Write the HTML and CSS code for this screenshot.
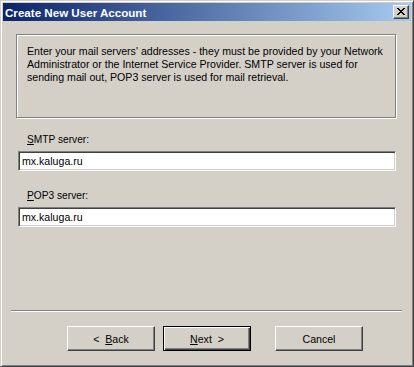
FILE: index.html
```html
<!DOCTYPE html>
<html lang="en">
<head>
    <meta charset="UTF-8">
    <title>Create New User Account</title>
    <link rel="stylesheet" href="styles.css">
</head>
<body>
    <div class="window">
        <div class="titlebar">
            <span class="title">Create New User Account</span>
            <span class="close-btn">
                <svg width="8" height="7" viewBox="0 0 8 7">
                    <path d="M0 0h2v1h-2zM6 0h2v1h-2zM1 1h2v1h-2zM5 1h2v1h-2zM2 2h4v1h-4zM3 3h2v1h-2zM2 4h4v1h-4zM1 5h2v1h-2zM5 5h2v1h-2zM0 6h2v1h-2zM6 6h2v1h-2z" fill="#000"/>
                </svg>
            </span>
        </div>

        <div class="content">
            <div class="info-box">
                Enter your mail servers' addresses - they must be provided by your Network<br>
                Administrator or the Internet Service Provider. SMTP server is used for<br>
                sending mail out, POP3 server is used for mail retrieval.
            </div>

            <div class="field first">
                <label for="smtp"><u>S</u>MTP server:</label>
                <input type="text" id="smtp" value="mx.kaluga.ru">
            </div>

            <div class="field">
                <label for="pop3"><u>P</u>OP3 server:</label>
                <input type="text" id="pop3" value="mx.kaluga.ru">
            </div>

            <div class="separator"></div>

            <div class="buttons">
                <button type="button">&lt;&nbsp; <u>B</u>ack</button>
                <button type="button" class="default"><u>N</u>ext&nbsp; &gt;</button>
                <button type="button" class="cancel">Cancel</button>
            </div>
        </div>
    </div>
</body>
</html>
```

FILE: styles.css
```css
body {
    margin: 0;
    font-family: "Liberation Sans", Arial, sans-serif;
    font-size: 10px;
    color: #000;
}
.window {
    width: 414px;
    height: 367px;
    box-sizing: border-box;
    background-color: #d4d0c8;
    border: 1px solid;
    border-color: #d4d0c8 #404040 #404040 #d4d0c8;
    box-shadow: inset 1px 1px 0 #fff, inset -1px -1px 0 #808080;
    padding: 2px;
    display: flex;
    flex-direction: column;
}
.titlebar {
    height: 18px;
    display: flex;
    align-items: center;
    padding-left: 2px;
    background: linear-gradient(to right, #0a246a, #a6caf0);
}
.title {
    color: #fff;
    font-weight: bold;
    font-size: 11.6px;
    line-height: 13px;
}
.close-btn {
    margin-left: auto;
    margin-right: 2px;
    width: 16px;
    height: 14px;
    box-sizing: border-box;
    background-color: #d4d0c8;
    border: 1px solid;
    border-color: #fff #404040 #404040 #fff;
    box-shadow: inset -1px -1px 0 #808080;
    display: flex;
    align-items: center;
    justify-content: center;
    padding: 0 1px 1px 0;
}
.close-btn svg {
    display: block;
}
.content {
    flex: 1;
    display: flex;
    flex-direction: column;
}
.info-box {
    margin: 13px 0 0 13px;
    width: 380px;
    height: 84px;
    box-sizing: border-box;
    border: 1px solid #808080;
    box-shadow: 1px 1px 0 #fff, inset 1px 1px 0 #fff;
    padding: 10px 8px 0 10px;
    font-size: 10.6px;
    line-height: 13px;
    white-space: nowrap;
}
.field {
    display: flex;
    flex-direction: column;
    margin-left: 15px;
    width: 378px;
}
.field.first {
    margin-top: 15px;
}
.field + .field {
    margin-top: 18px;
}
.field label {
    font-size: 10.2px;
    line-height: 13px;
    padding-left: 9px;
    margin-bottom: 5px;
}
.field input {
    height: 20px;
    box-sizing: border-box;
    margin: 0;
    padding: 0 0 0 3px;
    font-family: "Liberation Sans", Arial, sans-serif;
    font-size: 10.6px;
    background-color: #fff;
    border: 1px solid;
    border-color: #808080 #fff #fff #808080;
    box-shadow: inset 1px 1px 0 #404040, inset -1px -1px 0 #d4d0c8;
    outline: none;
}
.separator {
    margin: auto 9px 0 8px;
    height: 1px;
    background-color: #808080;
    border-bottom: 1px solid #fff;
}
.buttons {
    display: flex;
    padding-left: 64px;
    margin-top: 14px;
    margin-bottom: 13px;
}
.buttons button {
    width: 88px;
    height: 25px;
    margin: 0 8px 0 0;
    padding: 0;
    font-family: "Liberation Sans", Arial, sans-serif;
    font-size: 10.6px;
    color: #000;
    background-color: #d4d0c8;
    border: 1px solid;
    border-color: #fff #404040 #404040 #fff;
    box-shadow: inset -1px -1px 0 #808080;
}
.buttons .default {
    border-color: #000;
    box-shadow: inset 1px 1px 0 #fff, inset -1px -1px 0 #404040, inset -2px -2px 0 #808080;
}
.buttons .cancel {
    margin-left: 16px;
}
```
